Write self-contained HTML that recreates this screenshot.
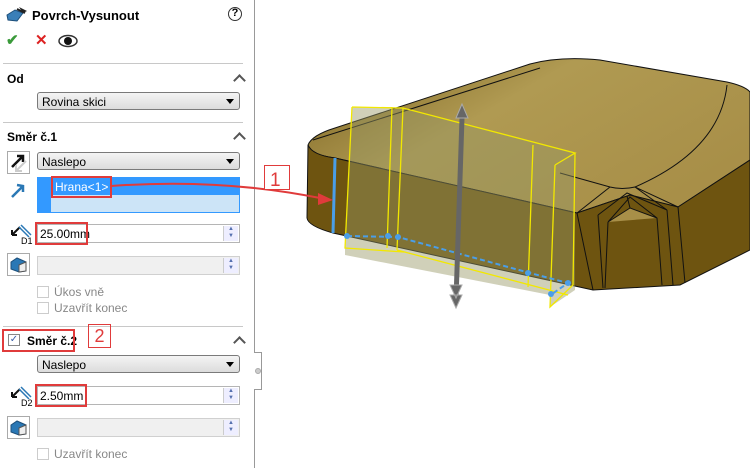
<!DOCTYPE html>
<html><head><meta charset="utf-8"><style>
body{margin:0;width:750px;height:468px;overflow:hidden;background:#fff;font-family:"Liberation Sans",sans-serif;position:relative}
.a{position:absolute}
.t{font-size:12px;color:#000}
.b{font-weight:bold}
.hr{position:absolute;left:3px;width:240px;height:1px;background:#c8c8c8}
.dd{position:absolute;left:37px;width:203px;height:18px;border:1px solid #7a7a7a;border-radius:3px;background:linear-gradient(#f4f4f4,#dcdcdc);box-sizing:border-box;font-size:12px;padding:2px 0 0 4px}
.dd:after{content:"";position:absolute;right:5px;top:6px;border-left:4px solid transparent;border-right:4px solid transparent;border-top:5px solid #000}
.in{position:absolute;left:37px;width:203px;height:19px;border:1px solid #b5b5b5;box-sizing:border-box;background:#fff;font-size:12px;padding:2px 0 0 2px}
.in.dis{background:#f0f0f0;border-color:#d0d0d0}
.sp{position:absolute;right:1px;top:1px;width:14px;height:15px;background:#eef;border-left:1px solid #ccc;font-size:6px;color:#5570b0;line-height:7px;text-align:center}
.ib{position:absolute;left:7px;width:23px;height:23px;border:1px solid #aaa;box-sizing:border-box;background:#fff}
.cb{position:absolute;left:37px;width:12px;height:12px;border:1px solid #ccc;box-sizing:border-box;background:#fff}
.red{position:absolute;border:2px solid #e03b3b;box-sizing:border-box}
.car{position:absolute;left:235px;width:7px;height:7px;border-left:2px solid #555;border-top:2px solid #555;transform:rotate(45deg)}
</style></head><body>
<div class="a" style="left:254px;top:0;width:1px;height:352px;background:#999"></div>
<div class="a" style="left:254px;top:352px;width:8px;height:38px;border:1px solid #999;border-left:none;box-sizing:border-box;background:#fff"></div>
<div class="a" style="left:254px;top:390px;width:1px;height:78px;background:#999"></div>
<div class="a" style="left:255px;top:368px;width:6px;height:6px;border-radius:50%;background:#ccc;border:1px solid #aaa;box-sizing:border-box"></div>

<svg class="a" style="left:5px;top:5px" width="26" height="20"><path d="M2 10 L10 5 L18 8 L12 16 L3 15Z" fill="#3a7fb8" stroke="#1d4f7a"/><path d="M14 2 L22 6 L18 8Z" fill="#222"/><path d="M12 4 L20 8" stroke="#222" stroke-width="2"/></svg>
<div class="a t b" style="left:32px;top:8px;font-size:13px">Povrch-Vysunout</div>
<div class="a" style="left:228px;top:7px;width:14px;height:14px;border:1.5px solid #333;border-radius:50%;font-size:11px;text-align:center;font-weight:bold;box-sizing:border-box;line-height:11px">?</div>
<div class="a" style="left:6px;top:31px;color:#3a9a3a;font-size:15px;font-weight:bold">✔</div>
<div class="a" style="left:35px;top:31px;color:#d22;font-size:15px;font-weight:bold">✕</div>
<svg class="a" style="left:58px;top:34px" width="20" height="14"><ellipse cx="10" cy="7" rx="9" ry="5.5" fill="#fff" stroke="#333" stroke-width="1.5"/><circle cx="10" cy="7" r="4" fill="#111"/></svg>

<div class="hr" style="top:63px"></div>
<div class="a t b" style="left:7px;top:72px">Od</div>
<div class="car" style="top:76px"></div>
<div class="dd" style="top:92px">Rovina skici</div>

<div class="hr" style="top:122px"></div>
<div class="a t b" style="left:7px;top:130px">Směr č.1</div>
<div class="car" style="top:134px"></div>
<div class="ib" style="top:151px"><svg width="21" height="21"><path d="M4 15 L15 4 M9 4 L15 4 L15 10" stroke="#111" stroke-width="2.5" fill="none"/><path d="M18 9 L8 19 M8 13 L8 19 L14 19" stroke="#ccc" stroke-width="2" fill="none"/></svg></div>
<div class="dd" style="top:152px">Naslepo</div>
<svg class="a" style="left:9px;top:182px" width="18" height="18"><path d="M3 15 L14 4 M8 3 L14 4 L14 10" stroke="#2a78b5" stroke-width="2.5" fill="none"/></svg>
<div class="a" style="left:37px;top:177px;width:203px;height:36px;background:#cce4f7;border:1px solid #3399ff;box-sizing:border-box"></div>
<div class="a" style="left:37px;top:177px;width:14px;height:36px;background:#3399ff"></div>
<div class="a" style="left:51px;top:177px;width:189px;height:18px;background:#3399ff"></div>
<div class="a" style="left:55px;top:180px;font-size:12px;color:#fff">Hrana&lt;1&gt;</div>
<div class="red" style="left:51px;top:176px;width:61px;height:22px"></div>

<svg class="a" style="left:9px;top:223px" width="26" height="22"><path d="M3 12 L11 4 M3 12 L8 12 M3 12 L3 7" stroke="#111" stroke-width="2" fill="none"/><path d="M12 2 L22 12 M10 4 L20 14" stroke="#2a78b5" stroke-width="1.5"/><text x="12" y="21" font-size="9" font-family="Liberation Sans">D1</text></svg>
<div class="in" style="top:224px">25.00mm<div class="sp">▲<br>▼</div></div>
<div class="red" style="left:35px;top:222px;width:53px;height:23px"></div>

<div class="ib" style="top:253px"><svg width="21" height="21"><path d="M3 8 L9 4 L18 8 L18 17 L11 18 L3 15Z" fill="#2a78b5" stroke="#1d4f7a"/><path d="M11 11 L18 8 L18 17 L11 18Z" fill="#eee" stroke="#555"/></svg></div>
<div class="in dis" style="top:256px"><div class="sp">▲<br>▼</div></div>
<div class="cb" style="top:286px"></div><div class="a t" style="left:54px;top:285px;color:#888">Úkos vně</div>
<div class="cb" style="top:302px"></div><div class="a t" style="left:54px;top:301px;color:#888">Uzavřít konec</div>

<div class="hr" style="top:326px"></div>
<div class="a" style="left:8px;top:334px;width:12px;height:12px;border:1px solid #888;box-sizing:border-box;font-size:10px;line-height:10px;color:#3a5faa;text-align:center">✓</div>
<div class="a t b" style="left:27px;top:334px">Směr č.2</div>
<div class="red" style="left:2px;top:329px;width:73px;height:23px"></div>
<div class="a" style="left:88px;top:324px;width:23px;height:24px;border:1px solid #e03b3b;box-sizing:border-box;color:#e03b3b;font-size:18px;text-align:center;line-height:22px">2</div>
<div class="car" style="top:338px"></div>
<div class="dd" style="top:355px">Naslepo</div>
<svg class="a" style="left:9px;top:385px" width="26" height="22"><path d="M3 12 L11 4 M3 12 L8 12 M3 12 L3 7" stroke="#111" stroke-width="2" fill="none"/><path d="M12 2 L22 12 M10 4 L20 14" stroke="#2a78b5" stroke-width="1.5"/><text x="12" y="21" font-size="9" font-family="Liberation Sans">D2</text></svg>
<div class="in" style="top:386px">2.50mm<div class="sp">▲<br>▼</div></div>
<div class="red" style="left:35px;top:384px;width:52px;height:23px"></div>
<div class="ib" style="top:416px"><svg width="21" height="21"><path d="M3 8 L9 4 L18 8 L18 17 L11 18 L3 15Z" fill="#2a78b5" stroke="#1d4f7a"/><path d="M11 11 L18 8 L18 17 L11 18Z" fill="#eee" stroke="#555"/></svg></div>
<div class="in dis" style="top:418px"><div class="sp">▲<br>▼</div></div>
<div class="cb" style="top:448px"></div><div class="a t" style="left:54px;top:447px;color:#888">Uzavřít konec</div>

<svg class="a" style="left:0;top:0" width="750" height="468">
<defs><linearGradient id="tg" x1="0" y1="0" x2="1" y2="0.6"><stop offset="0" stop-color="#7a6220"/><stop offset="0.45" stop-color="#b09a52"/><stop offset="1" stop-color="#a88f48"/></linearGradient></defs>
<path d="M308 145 Q312 135 335 128 L530 64 Q560 56 600 60 L727 82 Q745 86 750 92 L750 160 L678 207 L630 195 L577 213 L335 158 Q312 155 308 145Z" fill="url(#tg)" stroke="#111"/>
<path d="M308 145 Q312 155 335 158 L577 213 L630 195 L678 207 L750 160 L750 250 L680 285 L593 290 L333 233 Q308 226 307 218Z" fill="#6e5410" stroke="#111"/>
<path d="M608 222 L630 208 L657 218 Z" fill="#a88f48"/>
<path d="M577 213 L593 290 M598 215 L603 288 M608 222 L605 288 M608 222 L630 197 L657 218 L662 285 M667 210 L673 285 M678 207 L685 283 M627 196 L630 208 L657 218 M630 208 L608 222 M598 215 L627 193 L667 210" stroke="#111" fill="none"/>
<path d="M560 173 L610 187 Q622 190 635 187 L678 207 M610 187 L577 213 M635 187 L667 210" stroke="#111" fill="none"/>
<path d="M727 85 Q720 150 635 187" stroke="#111" fill="none"/>
<path d="M313 140 L540 68" stroke="#111" fill="none"/>
<path d="M335 158 L333 233" stroke="#111"/>
<path d="M352 107 L392 107 L403 108 L575 153 L575 290 L550 307 L550 295 L345 255 L345 235 Z" fill="rgba(150,150,100,0.45)"/>
<path d="M352 107 L403 108 L575 153 L555 165 M352 107 L345 248 L404 252 M392 107 L387 248 M403 108 L397 250 M575 153 L573 285 L550 307 L555 165 M533 145 L528 287 M397 250 L568 295" stroke="#f2e800" stroke-width="1.3" fill="none"/>
<path d="M335 158 L333 233" stroke="#4a9ee8" stroke-width="3"/>
<path d="M347 236 L398 237 L530 273 L568 283 L552 294" stroke="#4a9ee8" stroke-width="2" stroke-dasharray="5 3" fill="none"/>
<circle cx="347" cy="236" r="3" fill="#4a9ee8"/><circle cx="388" cy="236" r="3" fill="#4a9ee8"/><circle cx="398" cy="237" r="3" fill="#4a9ee8"/><circle cx="528" cy="273" r="3" fill="#4a9ee8"/><circle cx="568" cy="283" r="3" fill="#4a9ee8"/><circle cx="551" cy="294" r="3" fill="#4a9ee8"/>
<path d="M462 118 L456 300" stroke="#666" stroke-width="5"/>
<path d="M462 104 L456 118 L468 118Z" fill="#666" stroke="#aaa"/>
<path d="M450 285 L462 285 L456 298Z M450 295 L462 295 L456 308Z" fill="#666" stroke="#aaa"/>
<path d="M111 186 Q220 178 320 198" stroke="#e03b3b" stroke-width="2" fill="none"/>
<path d="M333 200 L318 193 L318 205Z" fill="#e03b3b"/>
<rect x="264.5" y="165.5" width="25" height="24" fill="#fff" stroke="#e03b3b"/>
<text x="270" y="186" font-size="19" fill="#e03b3b" font-family="Liberation Sans">1</text>
</svg>
</body></html>
